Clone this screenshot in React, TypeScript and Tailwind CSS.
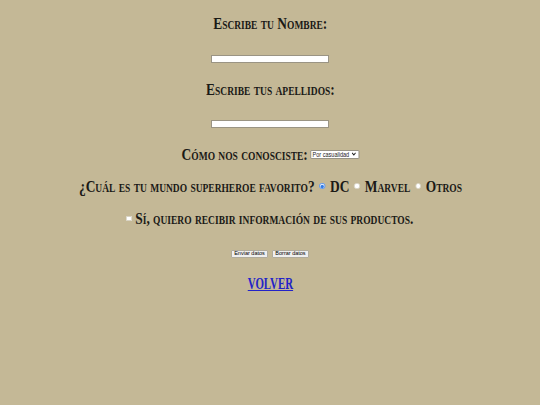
import React from "react";

const H = "font-['Liberation_Serif',serif] font-bold [font-variant:small-caps] text-[#1b1a16] text-[17px] leading-none whitespace-nowrap";
const ROW = "flex items-center justify-center scale-x-[0.79]";

function Radio({ checked }: { checked?: boolean }) {
  return (
    <span
      className={
        "inline-flex items-center justify-center w-[7.5px] h-[6px] rounded-full mx-[6px] " +
        (checked ? "bg-[#dbe8fb] border border-[#5b95ef]" : "bg-white border border-[#d8d3c4]")
      }
    >
      {checked && <span className="w-[4px] h-[3px] rounded-full bg-[#2f7ae5]" />}
    </span>
  );
}

export default function App() {
  return (
    <div className="w-[540px] h-[405px] bg-[#c4b896] flex flex-col">
      <div className="h-[46px] flex items-center justify-center">
        <div className={ROW}>
          <span className={H}>Escribe tu Nombre:</span>
        </div>
      </div>
      <div className="h-[26px] flex items-center justify-center">
        <div className="w-[118px] h-[8px] bg-white border border-[#9a9484]" />
      </div>
      <div className="h-[34px] flex items-center justify-center">
        <div className={ROW}>
          <span className={H}>Escribe tus apellidos:</span>
        </div>
      </div>
      <div className="h-[36px] flex items-center justify-center">
        <div className="w-[118px] h-[8px] bg-white border border-[#9a9484]" />
      </div>
      <div className="h-[24px] flex items-center justify-center">
        <div className={ROW}>
          <span className={H}>Cómo nos conosciste:</span>
          <div className="ml-[3px] w-[62px] h-[9px] bg-white border border-[#8f8a7c] rounded-[1px] flex items-center justify-between pl-[2px] pr-[3px] font-['Liberation_Sans',sans-serif] text-[7px] leading-none text-[#222]">
            <span>Por casualidad</span>
            <svg width="6" height="4" viewBox="0 0 6 4"><path d="M0.8 0.8 L3 3 L5.2 0.8" stroke="#222" strokeWidth="1.1" fill="none" /></svg>
          </div>
        </div>
      </div>
      <div className="h-[40px] flex items-center justify-center">
        <div className={ROW}>
          <span className={H}>¿Cuál es tu mundo superheroe favorito?</span>
          <Radio checked />
          <span className={H}>DC</span>
          <Radio />
          <span className={H}>Marvel</span>
          <Radio />
          <span className={H}>Otros</span>
        </div>
      </div>
      <div className="h-[24px] flex items-center justify-center">
        <div className={ROW}>
          <span className="inline-block w-[6.5px] h-[5px] bg-white border border-[#d8d3c4] mr-[5px]" />
          <span className={H}>Sí, quiero recibir información de sus productos.</span>
        </div>
      </div>
      <div className="h-[48px] flex items-center justify-center gap-[4px]">
        <button className="w-[37px] h-[8px] bg-[#efefef] border border-[#b0ab9c] rounded-[1px] font-['Liberation_Sans',sans-serif] text-[5.5px] leading-none text-black flex items-center justify-center">Enviar datos</button>
        <button className="w-[37px] h-[8px] bg-[#efefef] border border-[#b0ab9c] rounded-[1px] font-['Liberation_Sans',sans-serif] text-[5.5px] leading-none text-black flex items-center justify-center">Borrar datos</button>
      </div>
      <div className="h-[10px] flex items-center justify-center">
        <a href="#" className="inline-block scale-x-[0.64] font-['Liberation_Serif',serif] font-bold text-[17px] leading-none text-[#2323c8] underline">VOLVER</a>
      </div>
    </div>
  );
}
